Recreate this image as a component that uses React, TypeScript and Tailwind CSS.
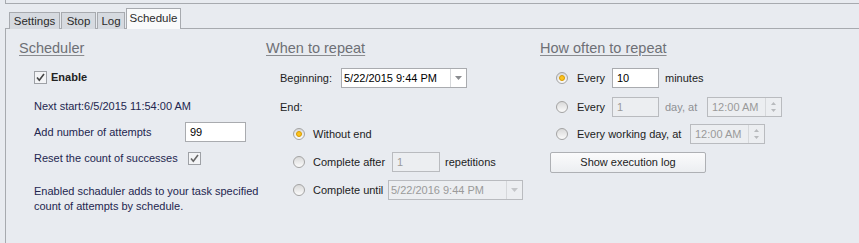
const font = { fontFamily: '"Liberation Sans", Arial, sans-serif' };

const Check = ({ bold = false }: { bold?: boolean }) => (
  <span className="flex h-[13px] w-[13px] shrink-0 items-center justify-center border border-[#9ea1a6] bg-[#f3f4f6]">
    <svg width="11" height="11" viewBox="0 0 11 11">
      <path
        d="M2 5.5 L4.3 8.2 L9 2"
        fill="none"
        stroke={bold ? "#444" : "#666"}
        strokeWidth="1.6"
      />
    </svg>
  </span>
);

const Radio = ({ checked = false }: { checked?: boolean }) => (
  <span className="flex h-[12px] w-[12px] shrink-0 items-center justify-center rounded-full border border-[#a3a3a3] bg-gradient-to-b from-[#d9d9d9] to-[#fbfbfb]">
    {checked && (
      <span className="h-[6px] w-[6px] rounded-full border border-[#d89a00] bg-[#fbc320]" />
    )}
  </span>
);

const Arrow = ({ disabled = false }: { disabled?: boolean }) => (
  <svg width="7" height="4" viewBox="0 0 7 4">
    <path d="M0 0 L7 0 L3.5 4 Z" fill={disabled ? "#c4c6c9" : "#8a8c90"} />
  </svg>
);

const Combo = ({
  value,
  width,
  disabled = false,
}: {
  value: string;
  width: string;
  disabled?: boolean;
}) => (
  <div
    className={`flex h-[20px] shrink-0 ${width} border ${
      disabled ? "border-[#b9bbbf] bg-[#eceef1] text-[#9a9a9a]" : "border-[#a9abaf] bg-white text-black"
    }`}
  >
    <span className="flex flex-1 items-center pl-[2px]">{value}</span>
    <span className="flex w-[16px] items-center justify-center border-l border-[#d6d8db]">
      <Arrow disabled={disabled} />
    </span>
  </div>
);

const Spin = ({ value, width }: { value: string; width: string }) => (
  <div className={`flex h-[20px] shrink-0 ${width} border border-[#b9bbbf] bg-[#eceef1] text-[#9a9a9a]`}>
    <span className="flex flex-1 items-center pl-[4px]">{value}</span>
    <span className="flex w-[16px] flex-col items-center justify-center gap-[4px] border-l border-[#d6d8db]">
      <svg width="5" height="3" viewBox="0 0 5 3">
        <path d="M0 3 L5 3 L2.5 0 Z" fill="#b8babd" />
      </svg>
      <svg width="5" height="3" viewBox="0 0 5 3">
        <path d="M0 0 L5 0 L2.5 3 Z" fill="#b8babd" />
      </svg>
    </span>
  </div>
);

const Field = ({
  value,
  width,
  disabled = false,
}: {
  value: string;
  width: string;
  disabled?: boolean;
}) => (
  <div
    className={`flex h-[20px] shrink-0 ${width} items-center border pl-[4px] ${
      disabled ? "border-[#b9bbbf] bg-[#eceef1] text-[#9a9a9a]" : "border-[#a9abaf] bg-white text-black"
    }`}
  >
    {value}
  </div>
);

const Header = ({ children }: { children: string }) => (
  <div className="mt-[11px] flex h-[17px] items-center text-[14.5px] text-[#6e7076] underline decoration-[#8a8c90] underline-offset-[2px]">
    {children}
  </div>
);

const tabs = [
  { name: "Settings", w: "w-[51px]" },
  { name: "Stop", w: "w-[35px]" },
  { name: "Log", w: "w-[28px]" },
];

export default function App() {
  return (
    <div
      className="h-[243px] w-[859px] overflow-hidden bg-[#e8ebf0] text-[11px] leading-[15px] text-[#1c1c1c]"
      style={font}
    >
      <div className="ml-[5px] h-[4px] border-b border-l border-[#a7aaaf]" />

      <div className="relative z-10 ml-[9px] mt-[4px] flex h-[21px] items-end">
        {tabs.map((t) => (
          <div
            key={t.name}
            className={`mr-[1px] flex h-[17px] ${t.w} items-center justify-center border border-b-0 border-[#a7aaaf] bg-[#d6dae0] text-[11.5px] text-[#2b2b2b]`}
          >
            {t.name}
          </div>
        ))}
        <div className="flex h-[21px] w-[55px] items-center justify-center border border-b-0 border-[#a7aaaf] bg-[#f9fafb] pb-[2px] text-[11.5px] text-[#2b2b2b]">
          Schedule
        </div>
      </div>

      <div className="ml-[5px] -mt-[1px] flex h-[220px] border-l border-t border-[#a7aaaf] pl-[13px]">
        {/* Scheduler */}
        <div className="flex w-[247px] flex-col">
          <Header>Scheduler</Header>
          <div className="mt-[10px] flex h-[20px] items-center gap-[4px] pl-[15px]">
            <Check bold />
            <span className="font-bold text-[#222]">Enable</span>
          </div>
          <div className="mt-[9px] flex h-[20px] items-center pl-[15px] text-[#23264f]">
            Next start:6/5/2015 11:54:00 AM
          </div>
          <div className="mt-[6px] flex h-[20px] items-center pl-[15px] text-[#23264f]">
            <span className="w-[151px]">Add number of attempts</span>
            <Field value="99" width="w-[61px]" />
          </div>
          <div className="mt-[6px] flex h-[20px] items-center pl-[15px] text-[#23264f]">
            <span className="w-[154px]">Reset the count of successes</span>
            <Check />
          </div>
          <div className="mt-[16px] pl-[15px] text-[#23264f]">
            Enabled schaduler adds to your task specified
            <br />
            count of attempts by schedule.
          </div>
        </div>

        {/* When to repeat */}
        <div className="flex w-[274px] flex-col">
          <Header>When to repeat</Header>
          <div className="mt-[11px] flex h-[20px] items-center pl-[14px]">
            <span className="w-[61px]">Beginning:</span>
            <Combo value="5/22/2015 9:44 PM" width="w-[126px]" />
          </div>
          <div className="mt-[9px] flex h-[20px] items-center pl-[14px]">End:</div>
          <div className="mt-[7px] flex h-[20px] items-center pl-[27px]">
            <Radio checked />
            <span className="ml-[8px]">Without end</span>
          </div>
          <div className="mt-[8px] flex h-[20px] items-center pl-[27px]">
            <Radio />
            <span className="ml-[8px] w-[79px] whitespace-nowrap">Complete after</span>
            <Field value="1" width="w-[48px]" disabled />
            <span className="ml-[5px]">repetitions</span>
          </div>
          <div className="mt-[8px] flex h-[20px] items-center pl-[27px]">
            <Radio />
            <span className="ml-[8px] w-[75px] whitespace-nowrap">Complete until</span>
            <Combo value="5/22/2016 9:44 PM" width="w-[135px]" disabled />
          </div>
        </div>

        {/* How often to repeat */}
        <div className="flex flex-1 flex-col">
          <Header>How often to repeat</Header>
          <div className="mt-[11px] flex h-[20px] items-center pl-[16px]">
            <Radio checked />
            <span className="ml-[9px] w-[35px]">Every</span>
            <Field value="10" width="w-[47px]" />
            <span className="ml-[6px]">minutes</span>
          </div>
          <div className="mt-[9px] flex h-[20px] items-center pl-[16px]">
            <Radio />
            <span className="ml-[9px] w-[35px]">Every</span>
            <Field value="1" width="w-[47px]" disabled />
            <span className="ml-[6px] w-[42px] text-[#8e9094]">day, at</span>
            <Spin value="12:00 AM" width="w-[75px]" />
          </div>
          <div className="mt-[7px] flex h-[20px] items-center pl-[16px]">
            <Radio />
            <span className="ml-[9px] w-[113px]">Every working day, at</span>
            <Spin value="12:00 AM" width="w-[75px]" />
          </div>
          <div className="ml-[10px] mt-[8px] flex h-[21px] w-[156px] items-center justify-center rounded-[2px] border border-[#aeb0b4] bg-gradient-to-b from-[#fbfbfc] to-[#eceef1] text-[#222]">
            Show execution log
          </div>
        </div>
      </div>
    </div>
  );
}
